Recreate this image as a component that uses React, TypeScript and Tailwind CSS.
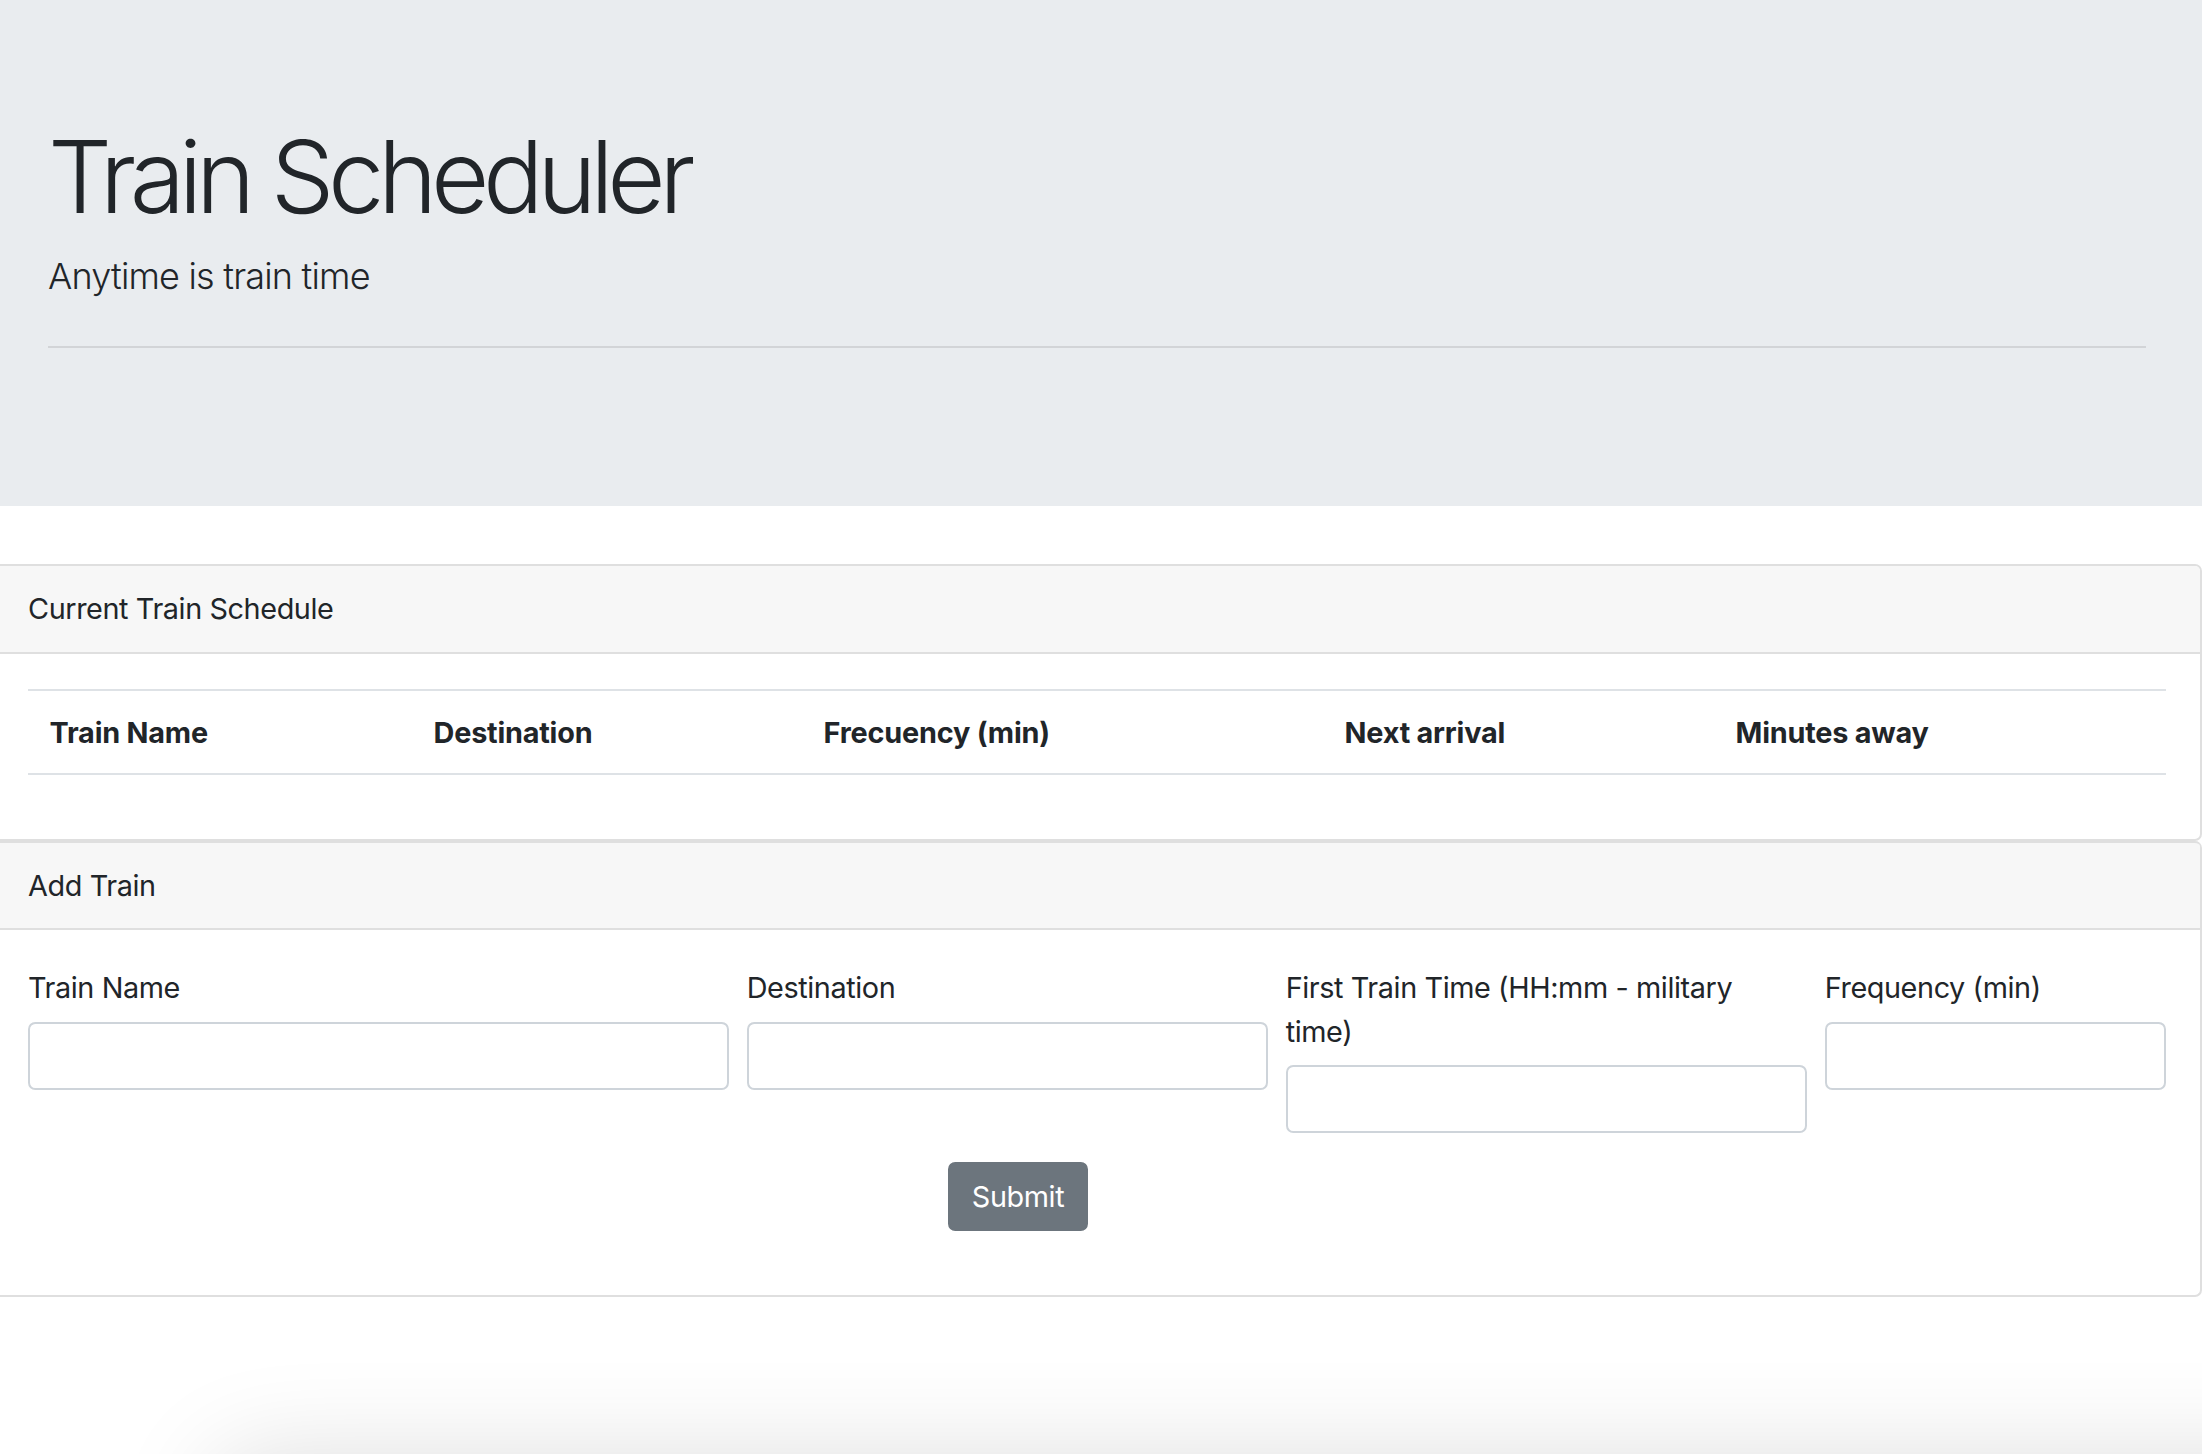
import React from "react";

export default function App() {
  const cols = [
    { label: "Train Name", w: "w-[384px]" },
    { label: "Destination", w: "w-[390px]" },
    { label: "Frecuency (min)", w: "w-[521px]" },
    { label: "Next arrival", w: "w-[391px]" },
    { label: "Minutes away", w: "w-[452px]" },
  ];
  const fields: React.ReactNode[] = [
    "Train Name",
    "Destination",
    <>
      First Train Time (HH:mm - military
      <br />
      time)
    </>,
    "Frequency (min)",
  ];
  return (
    <div className="relative h-[1454px] w-full overflow-hidden bg-white font-['Inter',sans-serif] text-[#212529] tracking-[-0.4px]">
      <div className="-ml-[8px] w-[2210px]">
        <div className="bg-[#e9ecef] px-[56px] pt-[116px] pb-[115px] mb-[58px]">
          <h1 className="text-[100.8px] font-light leading-[1.2] mb-[12px] tracking-[-6.4px]">Train Scheduler</h1>
          <p className="text-[36px] font-light leading-[1.5] tracking-[-0.8px]">Anytime is train time</p>
          <hr className="my-[43.2px] border-0 border-t-[2px] border-[#d2d4d7]" />
        </div>

        <div className="rounded-[7px] border-2 border-[#dfdfdf]">
          <div className="rounded-t-[5px] border-b-2 border-[#dfdfdf] bg-[#f7f7f7] px-[34px] py-[21px] text-[28.8px] leading-[43.2px]">
            Current Train Schedule
          </div>
          <div className="px-[34px] pt-[35px] pb-[37px]">
            <table className="mb-[27px] w-full border-collapse text-left">
              <thead>
                <tr className="border-t-2 border-b-2 border-[#dee2e6]">
                  {cols.map((c) => (
                    <th
                      key={c.label}
                      className={`${c.w} px-[21.6px] pt-[20px] pb-[19.5px] text-[28.8px] font-bold leading-[43.2px] tracking-[-0.2px]`}
                    >
                      {c.label}
                    </th>
                  ))}
                </tr>
              </thead>
              <tbody></tbody>
            </table>
          </div>
        </div>

        <div className="rounded-[7px] border-2 border-t-0 border-[#dfdfdf]">
          <div className="rounded-t-[5px] border-t-2 border-b-2 border-[#dfdfdf] bg-[#f7f7f7] px-[34px] py-[21px] text-[28.8px] leading-[43.2px]">
            Add Train
          </div>
          <div className="px-[34px] pt-[36px] pb-[64px]">
            <div className="grid grid-cols-[700.67px_521px_521px_341.33px] gap-x-[18px] items-start">
              {fields.map((l, i) => (
                <div key={i} className="mb-[29px] flex flex-col">
                  <label className="mb-[12px] text-[28.8px] leading-[43.2px]">{l}</label>
                  <input
                    type="text"
                    className="h-[68.4px] w-full rounded-[7.2px] border-2 border-[#ced4da] bg-white px-[21.6px] text-[28.8px] outline-none"
                  />
                </div>
              ))}
            </div>
            <div className="flex">
              <button className="ml-[920px] h-[68.4px] w-[140px] rounded-[7.2px] border-2 border-[#6c757d] bg-[#6c757d] text-[28.8px] leading-[43.2px] text-white">
                Submit
              </button>
            </div>
          </div>
        </div>
      </div>

      <div className="absolute left-[210px] right-[-200px] top-[1454px] h-[300px] rounded-[50px] bg-white shadow-[0_0_100px_0_rgba(0,0,0,0.13)]"></div>
    </div>
  );
}
